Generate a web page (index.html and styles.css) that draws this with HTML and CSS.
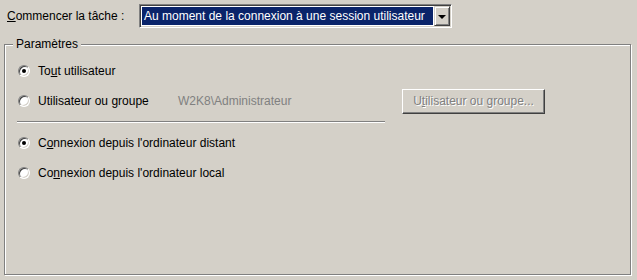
FILE: index.html
```html
<!DOCTYPE html>
<html lang="fr">
<head>
<meta charset="utf-8">
<link rel="stylesheet" href="styles.css">
</head>
<body>
<div class="page">
  <div class="top-row">
    <span class="top-label"><u>C</u>ommencer la tâche :</span>
    <div class="combo">
      <span class="combo-value">Au moment de la connexion à une session utilisateur</span>
      <span class="combo-btn"><span class="arrow"></span></span>
    </div>
  </div>
  <div class="group">
    <span class="legend">Paramètres</span>
    <div class="row r1">
      <span class="radio"><span class="dot"></span></span>
      <span class="label">To<u>u</u>t utilisateur</span>
    </div>
    <div class="row r2">
      <span class="radio"></span>
      <span class="label wide">Utilisateur ou <u>g</u>roupe</span>
      <span class="user">W2K8\Administrateur</span>
      <span class="btn">U<u>t</u>ilisateur ou groupe...</span>
    </div>
    <div class="sep"></div>
    <div class="row r3">
      <span class="radio"><span class="dot"></span></span>
      <span class="label">C<u>o</u>nnexion depuis l'ordinateur distant</span>
    </div>
    <div class="row r4">
      <span class="radio"></span>
      <span class="label">Co<u>n</u>nexion depuis l'ordinateur local</span>
    </div>
  </div>
</div>
</body>
</html>
```

FILE: styles.css
```css
html, body {
  margin: 0;
  padding: 0;
  background: #d4d0c8;
}
body {
  font-family: "Liberation Sans", Arial, sans-serif;
  font-size: 12px;
  color: #000;
  width: 637px;
  height: 280px;
  overflow: hidden;
}
u { text-decoration: underline; text-underline-offset: 1px; }
.page {
  padding: 4px 6px 0 4px;
}
.top-row {
  display: flex;
  align-items: center;
  height: 24px;
}
.top-label {
  width: 132px;
  padding-left: 3px;
  white-space: nowrap;
}
.combo {
  position: relative;
  display: flex;
  align-items: stretch;
  width: 308px;
  height: 20px;
  border: 1px solid;
  border-color: #808080 #fff #fff #808080;
  box-shadow: inset 1px 1px 0 #404040, inset -1px -1px 0 #d4d0c8;
  padding: 1px 1px 1px 2px;
  background: #fff;
}
.combo-value {
  flex: 1;
  background: #0a246a;
  color: #fff;
  display: flex;
  align-items: center;
  padding-left: 2px;
  margin: 1px 1px 1px 0;
  white-space: nowrap;
  overflow: hidden;
}
.combo-btn {
  width: 14px;
  border: 1px solid;
  border-color: #d4d0c8 #404040 #404040 #d4d0c8;
  box-shadow: inset 1px 1px 0 #fff, inset -1px -1px 0 #808080;
  background: #d4d0c8;
  display: flex;
  align-items: center;
  justify-content: center;
}
.arrow {
  width: 0;
  height: 0;
  border-left: 4px solid transparent;
  border-right: 4px solid transparent;
  border-top: 4px solid #000;
  margin-top: 1px;
}
.group {
  position: relative;
  box-sizing: border-box;
  margin-top: 16px;
  height: 231px;
  width: 627px;
  border: 1px solid #808080;
  box-shadow: inset 1px 1px 0 #fff, 1px 1px 0 #fff;
  padding: 16px 0 0 13px;
}
.legend {
  position: absolute;
  left: 8px;
  top: -8px;
  padding: 0 3px;
  background: #d4d0c8;
  line-height: 14px;
}
.row {
  display: flex;
  align-items: center;
  height: 20px;
  white-space: nowrap;
}
.r2 { height: 26px; margin-top: 7px; }
.r3 { margin-top: 10px; }
.r4 { margin-top: 10px; }
.radio {
  position: relative;
  box-sizing: border-box;
  width: 12px;
  height: 12px;
  border-radius: 50%;
  border: 1px solid;
  border-color: #808080 #fff #fff #808080;
  background: #fff;
  box-shadow: inset 1px 1px 0 #404040, inset -1px -1px 0 #d4d0c8;
  margin-right: 8px;
  display: flex;
  align-items: center;
  justify-content: center;
  flex: none;
}
.dot {
  width: 4px;
  height: 4px;
  border-radius: 50%;
  background: #000;
}
.label.wide { width: 140px; }
.user {
  width: 224px;
  color: #808080;
}
.btn {
  box-sizing: border-box;
  width: 143px;
  height: 25px;
  border: 1px solid;
  border-color: #fff #404040 #404040 #fff;
  box-shadow: inset -1px -1px 0 #808080;
  color: #808080;
  text-shadow: 1px 1px 0 #fff;
  display: flex;
  align-items: center;
  justify-content: center;
}
.sep {
  margin-top: 7px;
  margin-left: -1px;
  width: 368px;
  height: 0;
  border-top: 1px solid #808080;
  border-bottom: 1px solid #fff;
}
```
